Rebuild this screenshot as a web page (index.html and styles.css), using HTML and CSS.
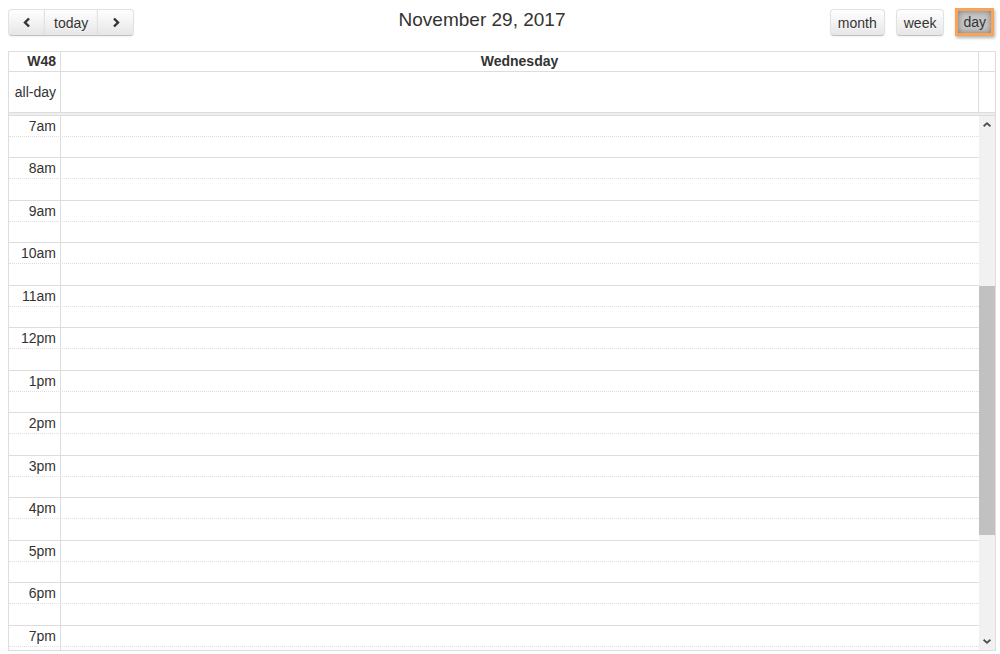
FILE: index.html
```html
<!doctype html>
<html>
<head>
	<meta charset="utf-8">
	<title>Calendar - day view</title>
	<link rel="stylesheet" href="styles.css">
</head>

<body>
	<div class="calendar">
		<div class="toolbar">
			<div class="btn-group">
				<button class="btn btn-icon first" type="button">
					<svg width="8" height="11" viewBox="0 0 8 11"><polyline points="6,1.5 2,5.5 6,9.5" fill="none" stroke="#333" stroke-width="2.4"/></svg>
				</button>
				<button class="btn btn-today" type="button">today</button>
				<button class="btn btn-icon last" type="button">
					<svg width="8" height="11" viewBox="0 0 8 11"><polyline points="2,1.5 6,5.5 2,9.5" fill="none" stroke="#333" stroke-width="2.4"/></svg>
				</button>
			</div>
			<h2 class="title">November 29, 2017</h2>
			<div class="views">
				<button class="btn" type="button">month</button>
				<button class="btn" type="button">week</button>
				<button class="btn active" type="button">day</button>
			</div>
		</div>

		<div class="view">
			<div class="head-row">
				<div class="axis week-no">W48</div>
				<div class="day-name">Wednesday</div>
				<div class="gutter"></div>
			</div>
			<div class="allday-row">
				<div class="axis">all-day</div>
				<div class="day-cell"></div>
				<div class="gutter"></div>
			</div>
			<div class="divider"></div>

			<div class="time-body">
				<div class="scroller">
					<div class="slats">
						<div class="slat"><div class="axis">7am</div><div class="slot"></div></div>
						<div class="slat half"><div class="axis"></div><div class="slot"></div></div>
						<div class="slat"><div class="axis">8am</div><div class="slot"></div></div>
						<div class="slat half"><div class="axis"></div><div class="slot"></div></div>
						<div class="slat"><div class="axis">9am</div><div class="slot"></div></div>
						<div class="slat half"><div class="axis"></div><div class="slot"></div></div>
						<div class="slat"><div class="axis">10am</div><div class="slot"></div></div>
						<div class="slat half"><div class="axis"></div><div class="slot"></div></div>
						<div class="slat"><div class="axis">11am</div><div class="slot"></div></div>
						<div class="slat half"><div class="axis"></div><div class="slot"></div></div>
						<div class="slat"><div class="axis">12pm</div><div class="slot"></div></div>
						<div class="slat half"><div class="axis"></div><div class="slot"></div></div>
						<div class="slat"><div class="axis">1pm</div><div class="slot"></div></div>
						<div class="slat half"><div class="axis"></div><div class="slot"></div></div>
						<div class="slat"><div class="axis">2pm</div><div class="slot"></div></div>
						<div class="slat half"><div class="axis"></div><div class="slot"></div></div>
						<div class="slat"><div class="axis">3pm</div><div class="slot"></div></div>
						<div class="slat half"><div class="axis"></div><div class="slot"></div></div>
						<div class="slat"><div class="axis">4pm</div><div class="slot"></div></div>
						<div class="slat half"><div class="axis"></div><div class="slot"></div></div>
						<div class="slat"><div class="axis">5pm</div><div class="slot"></div></div>
						<div class="slat half"><div class="axis"></div><div class="slot"></div></div>
						<div class="slat"><div class="axis">6pm</div><div class="slot"></div></div>
						<div class="slat half"><div class="axis"></div><div class="slot"></div></div>
						<div class="slat"><div class="axis">7pm</div><div class="slot"></div></div>
						<div class="slat half"><div class="axis"></div><div class="slot"></div></div>
					</div>
				</div>
				<div class="scrollbar">
					<div class="sb-btn">
						<svg width="8" height="5" viewBox="0 0 8 5"><path d="M0 3.6 L4 0 L8 3.6 L6.8 5 L4 2.4 L1.2 5 Z" fill="#505050"/></svg>
					</div>
					<div class="sb-thumb"></div>
					<div class="sb-btn sb-down">
						<svg width="8" height="5" viewBox="0 0 8 5"><path d="M0 1.4 L4 5 L8 1.4 L6.8 0 L4 2.6 L1.2 0 Z" fill="#505050"/></svg>
					</div>
				</div>
			</div>
		</div>
	</div>
</body>
</html>
```

FILE: styles.css
```css
html{
	background: #fff;
	overflow: hidden;
}
body{
	margin: 8px 0 0 8px;
	font-family: "Liberation Sans", Arial, sans-serif;
	font-size: 14px;
	color: #333;
}
.calendar{
	width: 988px;
}

/* toolbar */
.toolbar{
	display: flex;
	align-items: flex-start;
	padding: 1px 2px 0 0;
	margin-bottom: 15px;
}
.title{
	flex: 1;
	margin: 0;
	text-align: center;
	font-size: 19px;
	font-weight: normal;
	line-height: 22px;
}
.btn-group{
	display: flex;
}
.views{
	display: flex;
	gap: 11px;
}
.btn{
	box-sizing: border-box;
	height: 27px;
	padding: 0 7px;
	margin: 0;
	border: 1px solid;
	border-color: #e2e2e2 #e2e2e2 #c0c0c0;
	border-radius: 4px;
	background: linear-gradient(#fff, #e6e6e6);
	box-shadow: inset 0 1px 0 rgba(255,255,255,.2), 0 1px 2px rgba(0,0,0,.05);
	font-family: "Liberation Sans", Arial, sans-serif;
	font-size: 14px;
	color: #333;
	text-shadow: 0 1px 1px rgba(255,255,255,.75);
	cursor: pointer;
}
.btn-group .btn{
	border-radius: 0;
}
.btn-group .btn + .btn{
	margin-left: -1px;
}
.btn-group .first{
	border-radius: 4px 0 0 4px;
}
.btn-group .last{
	border-radius: 0 4px 4px 0;
}
.btn-icon{
	width: 37px;
	display: flex;
	align-items: center;
	justify-content: center;
	padding: 0;
}
.btn-today{
	padding: 0 9px;
}
.btn.active{
	height: 28px;
	margin-top: -1px;
	margin-bottom: -1px;
	border-radius: 0;
	background: #c6c6c6;
	outline: 3px solid #f8a25a;
	outline-offset: -3px;
	box-shadow: inset 0 0 6px 2px rgba(0,0,0,.4), 1px 2px 3px rgba(0,0,0,.3);
	text-shadow: none;
}

/* view */
.view{
	border: 1px solid #ddd;
}
.head-row,
.allday-row{
	display: grid;
	grid-template-columns: 52px 1fr 16px;
	border-bottom: 1px solid #ddd;
}
.head-row{
	height: 19px;
	line-height: 19px;
	font-weight: bold;
}
.allday-row{
	height: 40px;
}
.axis{
	box-sizing: border-box;
	border-right: 1px solid #ddd;
	padding-right: 4px;
	display: flex;
	align-items: center;
	justify-content: flex-end;
	white-space: nowrap;
}
.day-name{
	text-align: center;
	border-right: 1px solid #ddd;
}
.day-cell{
	border-right: 1px solid #ddd;
}
.divider{
	height: 2px;
	background: #eee;
	border-bottom: 1px solid #ddd;
}

/* time grid */
.time-body{
	display: flex;
	height: 534px;
}
.scroller{
	flex: 1;
	overflow: hidden;
}
.slats{
	/* scrolled to 7am */
	margin-top: -1.5px;
}
.slat{
	box-sizing: border-box;
	height: 21.25px;
	display: grid;
	grid-template-columns: 52px 1fr;
	border-top: 1px solid #ddd;
}
.slat.half{
	border-top-style: dotted;
}

/* scrollbar */
.scrollbar{
	width: 16px;
	background: #f1f1f1;
	display: flex;
	flex-direction: column;
}
.sb-btn{
	height: 17px;
	display: flex;
	align-items: center;
	justify-content: center;
}
.sb-btn svg{
	display: block;
}
.sb-down{
	margin-top: auto;
}
.sb-thumb{
	margin-top: 153px;
	height: 249px;
	background: #c1c1c1;
}
```
